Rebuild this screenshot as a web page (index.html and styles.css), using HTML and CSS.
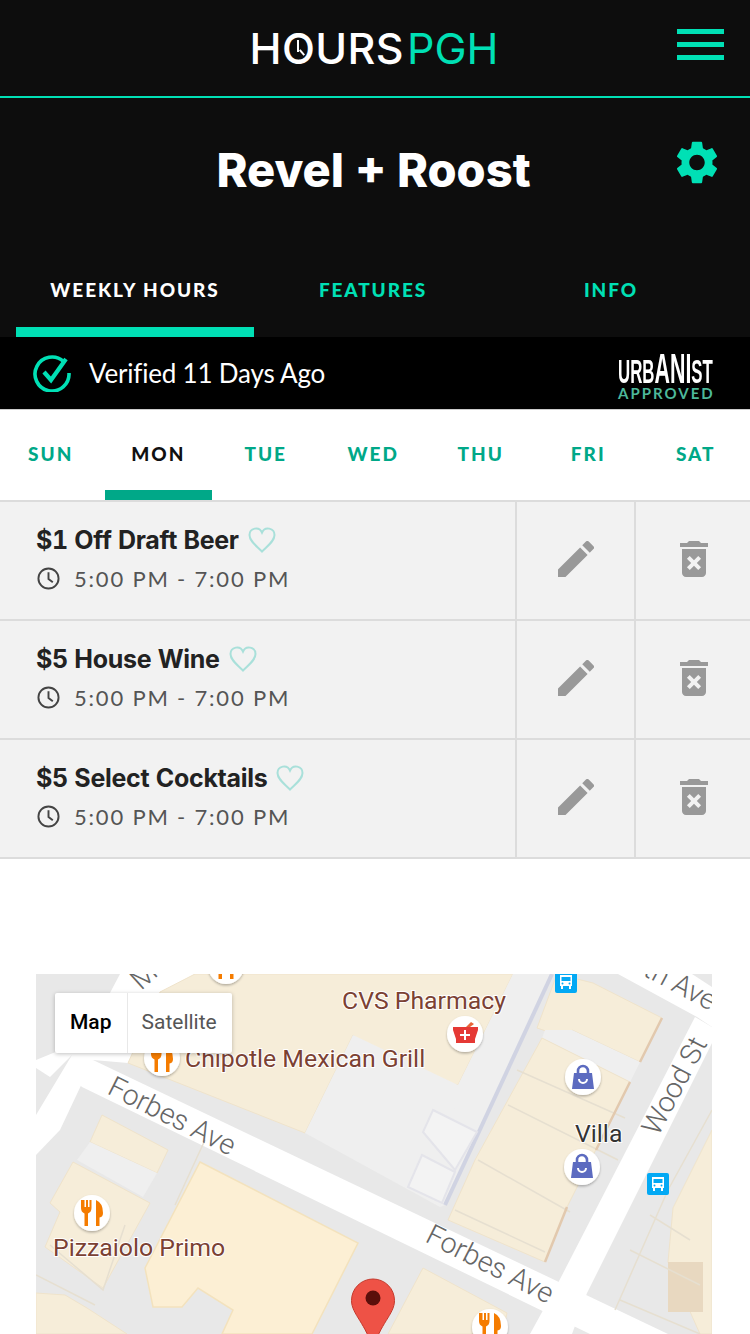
FILE: index.html
```html
<!DOCTYPE html>
<html lang="en">
<head>
  <meta charset="UTF-8" />
  <meta name="viewport" content="width=device-width, initial-scale=1.0"/>
  <title>Revel + Roost - Hours PGH</title>
  <link rel="stylesheet" href="styles.css">
</head>
<body>
  <div class="scroll-thumb"></div>

  <header class="topbar">
    <div class="logo">
      <span>H</span><span class="logo-o">O<i class="hand-long"></i><i class="hand-short"></i></span><span>URS</span><span class="logo-pgh">PGH</span>
    </div>
    <div class="burger"><span></span><span></span><span></span></div>
  </header>

  <section class="venue">
    <h1>Revel + Roost</h1>
    <svg class="gear" viewBox="2.6 2 18.8 20"><path d="M19.14 12.94c.04-.3.06-.61.06-.94 0-.32-.02-.64-.07-.94l2.03-1.58c.18-.14.23-.41.12-.61l-1.92-3.32c-.12-.22-.37-.29-.59-.22l-2.39.96c-.5-.38-1.03-.7-1.62-.94l-.36-2.54c-.04-.24-.24-.41-.48-.41h-3.84c-.24 0-.43.17-.47.41l-.36 2.54c-.59.24-1.13.57-1.62.94l-2.39-.96c-.22-.08-.47 0-.59.22L2.74 8.87c-.12.21-.08.47.12.61l2.03 1.58c-.05.3-.09.63-.09.94s.02.64.07.94l-2.03 1.58c-.18.14-.23.41-.12.61l1.92 3.32c.12.22.37.29.59.22l2.39-.96c.5.38 1.03.7 1.62.94l.36 2.54c.05.24.24.41.48.41h3.84c.24 0 .44-.17.47-.41l.36-2.54c.59-.24 1.13-.56 1.62-.94l2.39.96c.22.08.47 0 .59-.22l1.92-3.32c.12-.22.07-.47-.12-.61l-2.01-1.58zM12 15.6c-1.98 0-3.6-1.62-3.6-3.6s1.62-3.6 3.6-3.6 3.6 1.62 3.6 3.6-1.62 3.6-3.6 3.6z"/></svg>
  </section>

  <nav class="tabs">
    <a class="tab active">WEEKLY HOURS</a>
    <a class="tab">FEATURES</a>
    <a class="tab">INFO</a>
  </nav>

  <div class="verified">
    <svg class="check" viewBox="0 0 38 38">
      <path d="M30.5 7.5A17 17 0 1 0 36 19" fill="none" stroke="#00e0b5" stroke-width="3.6"/>
      <path d="M11 18l7 8L33 5" fill="none" stroke="#00e0b5" stroke-width="4.2"/>
    </svg>
    <span class="verified-text">Verified 11 Days Ago</span>
    <div class="urbanist">
      <div class="urbanist-word">URB<span class="u-big">ANI</span>ST</div>
      <div class="approved">APPROVED</div>
    </div>
  </div>

  <nav class="days">
    <a class="day">SUN</a>
    <a class="day active">MON</a>
    <a class="day">TUE</a>
    <a class="day">WED</a>
    <a class="day">THU</a>
    <a class="day">FRI</a>
    <a class="day">SAT</a>
  </nav>

  <div class="specials">
    <div class="special">
      <div class="special-info">
        <div class="special-name">$1 Off Draft Beer
          <svg class="heart" viewBox="0 0 28 26"><path d="M14 24.5C8 18.5 1.5 14 1.5 8A6.5 6.5 0 0 1 14 5.5 6.5 6.5 0 0 1 26.500 8C26.500 14 20 18.500 14 24.500z"/></svg>
        </div>
        <div class="special-time">
          <svg class="clock" viewBox="0 0 24 24"><circle cx="12" cy="12" r="10.500"/><path d="M12 5.500V12.500L16.500 16"/></svg>
          5:00 PM - 7:00 PM
        </div>
      </div>
      <div class="action edit">
        <svg class="pencil" viewBox="3 3 18 18"><path d="M3 17.25V21h3.75L17.81 9.94l-3.75-3.75L3 17.25zM20.71 7.04a1 1 0 0 0 0-1.410l-2.340-2.340a1 1 0 0 0-1.410 0l-1.830 1.830 3.750 3.750 1.830-1.830z"/></svg>
      </div>
      <div class="action remove">
        <svg class="trash" viewBox="5 3 14 18"><path d="M6 19c0 1.100.9 2 2 2h8c1.100 0 2-.9 2-2V7H6v12zm2.460-7.120l1.410-1.410L12 12.590l2.120-2.120 1.410 1.410L13.410 14l2.120 2.120-1.410 1.410L12 15.410l-2.120 2.120-1.410-1.410L10.590 14l-2.130-2.120zM15.500 4l-1-1h-5l-1 1H5v2h14V4z"/></svg>
      </div>
    </div>

    <div class="special">
      <div class="special-info">
        <div class="special-name">$5 House Wine
          <svg class="heart" viewBox="0 0 28 26"><path d="M14 24.5C8 18.5 1.5 14 1.5 8A6.5 6.5 0 0 1 14 5.5 6.5 6.5 0 0 1 26.500 8C26.500 14 20 18.500 14 24.500z"/></svg>
        </div>
        <div class="special-time">
          <svg class="clock" viewBox="0 0 24 24"><circle cx="12" cy="12" r="10.500"/><path d="M12 5.500V12.500L16.500 16"/></svg>
          5:00 PM - 7:00 PM
        </div>
      </div>
      <div class="action edit">
        <svg class="pencil" viewBox="3 3 18 18"><path d="M3 17.25V21h3.75L17.81 9.94l-3.75-3.75L3 17.25zM20.71 7.04a1 1 0 0 0 0-1.410l-2.340-2.340a1 1 0 0 0-1.410 0l-1.830 1.830 3.750 3.750 1.830-1.830z"/></svg>
      </div>
      <div class="action remove">
        <svg class="trash" viewBox="5 3 14 18"><path d="M6 19c0 1.100.9 2 2 2h8c1.100 0 2-.9 2-2V7H6v12zm2.460-7.120l1.410-1.410L12 12.590l2.120-2.120 1.410 1.410L13.410 14l2.120 2.120-1.410 1.410L12 15.410l-2.120 2.120-1.410-1.410L10.590 14l-2.130-2.120zM15.500 4l-1-1h-5l-1 1H5v2h14V4z"/></svg>
      </div>
    </div>

    <div class="special">
      <div class="special-info">
        <div class="special-name">$5 Select Cocktails
          <svg class="heart" viewBox="0 0 28 26"><path d="M14 24.5C8 18.5 1.5 14 1.5 8A6.5 6.5 0 0 1 14 5.5 6.5 6.5 0 0 1 26.500 8C26.500 14 20 18.500 14 24.500z"/></svg>
        </div>
        <div class="special-time">
          <svg class="clock" viewBox="0 0 24 24"><circle cx="12" cy="12" r="10.500"/><path d="M12 5.500V12.500L16.500 16"/></svg>
          5:00 PM - 7:00 PM
        </div>
      </div>
      <div class="action edit">
        <svg class="pencil" viewBox="3 3 18 18"><path d="M3 17.25V21h3.75L17.81 9.94l-3.75-3.75L3 17.25zM20.71 7.04a1 1 0 0 0 0-1.410l-2.340-2.340a1 1 0 0 0-1.410 0l-1.830 1.830 3.750 3.750 1.830-1.830z"/></svg>
      </div>
      <div class="action remove">
        <svg class="trash" viewBox="5 3 14 18"><path d="M6 19c0 1.100.9 2 2 2h8c1.100 0 2-.9 2-2V7H6v12zm2.460-7.120l1.410-1.410L12 12.590l2.120-2.120 1.410 1.410L13.410 14l2.120 2.120-1.410 1.410L12 15.410l-2.120 2.120-1.410-1.410L10.590 14l-2.130-2.120zM15.500 4l-1-1h-5l-1 1H5v2h14V4z"/></svg>
      </div>
    </div>
  </div>

  <div class="map">
    <svg class="map-canvas" viewBox="36 974 676 360">
      <defs>
        <g id="fork">
          <path d="M-11 -13v8q0 4 3.500 5.500V13h3.500V.5q3.500-1.500 3.500-5.500v-8h-2v7h-1.500v-7h-2v7h-1.500v-7z" fill="#f57c00"/>
          <path d="M4 13V-13q7 3 7 13 0 4-3.500 4.500V13z" fill="#f57c00"/>
        </g>
        <g id="bag">
          <path d="M-5 -5v-2a5 5 0 0 1 10 0v2" fill="none" stroke="#5c6bc0" stroke-width="2.600"/>
          <path d="M-9 -5H9L11 11H-11z" fill="#5c6bc0"/>
          <path d="M-4 1a4 4 0 0 0 8 0" fill="none" stroke="#fff" stroke-width="2"/>
        </g>
        <g id="bus">
          <rect x="-11" y="-11" width="22" height="22" rx="2" fill="#03a9f4"/>
          <path d="M-6 -7h12v11h-1v3h-2v-3h-6v3h-2v-3h-1z" fill="#fff"/>
          <rect x="-4.500" y="-5" width="9" height="4" fill="#03a9f4"/>
          <circle cx="-3.500" cy="1.500" r="1" fill="#03a9f4"/>
          <circle cx="3.500" cy="1.500" r="1" fill="#03a9f4"/>
        </g>
        <filter id="pin-shadow" x="-30%" y="-30%" width="160%" height="170%">
          <feDropShadow dx="0" dy="1.500" stdDeviation="1" flood-color="#000" flood-opacity=".28"/>
        </filter>
      </defs>

      <rect x="36" y="974" width="676" height="360" fill="#e8e8e8"/>

      <!-- roads -->
      <path class="road" d="M120 974H195L165 992 128 1063 93 1060 60 1130 36 1155V1115L72 1055 50 1077 36 1068V1060L85 1040z"/>
      <path class="road" d="M93 1060L668 1334H590L82 1087 70 1075z"/>
      <path class="road" d="M695 1017L712 1027V1043L587 1293 572 1334H530L558 1283z"/>
      <path class="road" d="M618 974H692L712 987V1027L697 1017z"/>

      <!-- blocks -->
      <path class="beige" d="M195 974H513L458 1085 400 1075 353 1035 305 1133 128 1063 160 992z"/>
      <path class="plaza" d="M353 1035L458 1085 488 1100 540 974H513L440 1207 305 1133z"/>
      <path class="plaza" d="M513 974H552L445 1205 440 1207 458 1085z"/>
      <path class="plaza-edge" d="M552 974L445 1205"/>
      <path class="plaza-box" d="M433 1110L477 1132 455 1170 423 1132z"/>
      <path class="plaza-box" d="M422 1155L455 1172 442 1203 408 1187z"/>
      <path class="beige" d="M557 974L593 983 662 1018 640 1062 572 1030 567 1038 537 1028z"/>
      <path class="plaza" d="M572 1030L640 1062 630 1082 542 1038 545 1030z"/>
      <path class="beige" d="M542 1038L630 1082 567 1207 545 1262 448 1220 475 1160z"/>
      <path class="line" d="M508 1105L618 1160M478 1160L570 1212M455 1210L545 1252M517 1070L625 1118"/>
      <path class="edge" d="M662 1018L640 1062M630 1082L596 1150M567 1207L545 1262"/>
      <path class="beige" d="M102 1115L168 1150 157 1173 90 1142z"/>
      <path class="plaza" d="M90 1142L157 1173 143 1197 77 1160z"/>
      <path class="beige" d="M73 1162L150 1203 103 1288 45 1247 60 1212 50 1203z"/>
      <path class="beige" d="M36 1293L65 1295 87 1308 127 1334H36z"/>
      <path class="bright" d="M200 1162L358 1243 312 1334H222L233 1310 198 1288 182 1307H153L145 1268z"/>
      <path class="beige" d="M423 1268L507 1313 502 1334H388z"/>
      <path class="beige" d="M673 1208L712 1130V1334L700 1334 668 1262z"/>
      <rect x="668" y="1262" width="35" height="50" fill="#e8d8c0"/>
      <path class="line" d="M615 1310L668 1190 712 1110M630 1250L700 1285M650 1215L690 1240M620 1300L700 1334M50 1245L103 1290 125 1225M36 1275L95 1305M205 1140L175 1205"/>

      <!-- road names -->
      <text class="road-name" transform="translate(106 1093) rotate(27)">Forbes Ave</text>
      <text class="road-name" transform="translate(424 1241) rotate(27)">Forbes Ave</text>
      <text class="road-name" transform="translate(658 1137) rotate(-62)">Wood St</text>
      <text class="road-name end" transform="translate(710 1011) rotate(28)">Fifth Ave</text>
      <text class="road-name" transform="translate(141 991) rotate(-42)">M</text>

      <!-- places -->
      <text class="place" x="342" y="1009">CVS Pharmacy</text>
      <text class="place" x="185" y="1067">Chipotle Mexican Grill</text>
      <text class="place" x="53" y="1256">Pizzaiolo Primo</text>
      <text class="place dark" x="575" y="1142">Villa</text>

      <!-- markers -->
      <g filter="url(#pin-shadow)">
        <circle class="dot" cx="226" cy="966" r="18"/>
        <circle class="dot" cx="162" cy="1058" r="18"/>
        <circle class="dot" cx="92" cy="1213" r="18"/>
        <circle class="dot" cx="465" cy="1034" r="18"/>
        <circle class="dot" cx="583" cy="1077" r="18"/>
        <circle class="dot" cx="582" cy="1167" r="18"/>
        <circle class="dot" cx="490" cy="1327" r="18"/>
      </g>
      <use href="#fork" transform="translate(226 966)"/>
      <use href="#fork" transform="translate(162 1059)"/>
      <use href="#fork" transform="translate(92 1213)"/>
      <use href="#fork" transform="translate(490 1326)"/>
      <use href="#bag" transform="translate(583 1078)"/>
      <use href="#bag" transform="translate(582 1167)"/>
      <use href="#bus" transform="translate(566 982)"/>
      <use href="#bus" transform="translate(658 1184)"/>
      <path d="M453 1027h25v3l-3 9v4h-19v-4l-3-9z" fill="#e53935"/>
      <path d="M466 1027l5-5 3 2-4 3z" fill="#e8663a"/>
      <path d="M465 1030v10M460 1035h10" stroke="#fff" stroke-width="2"/>

      <path d="M373 1279a21.500 21.500 0 0 1 21.500 21.500c0 14-15 23-21.500 50-6.500-27-21.500-36-21.500-50a21.500 21.500 0 0 1 21.500-21.500z" fill="#ee5246" stroke="#c5392c"/>
      <circle cx="373" cy="1298" r="7.500" fill="#5a0f0b"/>
    </svg>

    <div class="map-type">
      <div class="map-type-btn active">Map</div>
      <div class="map-type-btn">Satellite</div>
    </div>
  </div>
</body>
</html>
```

FILE: styles.css
```css
:root {
  --teal: #00e0b5;
  --teal-dark: #00a888;
  --black: #0d0d0d;
  --line: #dcdcdc;
}

html, body {
  height: 1334px;
  overflow: hidden;
}

body {
  margin: 0;
  position: relative;
  font-family: Lato, sans-serif;
  background-color: #fff;
  color: #222;
}

.scroll-thumb {
  position: absolute;
  top: 77px;
  right: 0;
  width: 8px;
  height: 75px;
  background-color: #0a6ebd;
  border-radius: 5px 0 0 5px;
}

/* top bar */
.topbar {
  height: 96px;
  background-color: var(--black);
  border-bottom: 2px solid var(--teal);
  display: flex;
  justify-content: center;
  align-items: center;
  position: relative;
}

.logo {
  font-family: Inter, sans-serif;
  font-size: 43px;
  font-weight: 500;
  line-height: 1;
  letter-spacing: .4px;
  color: #fff;
  display: flex;
  margin-left: -2px;
}

.logo-pgh {
  color: var(--teal);
  font-weight: 400;
  letter-spacing: 0;
  margin-left: 3px;
}

.logo-o {
  position: relative;
}

.logo-o i {
  position: absolute;
  background-color: #fff;
  width: 2px;
}

.hand-long {
  left: 15px;
  top: 13px;
  height: 12px;
}

.hand-short {
  left: 19px;
  top: 22px;
  height: 7px;
  transform: rotate(-40deg);
}

.burger {
  position: absolute;
  right: 26px;
  top: 29px;
  width: 47px;
  display: flex;
  flex-direction: column;
  gap: 8px;
}

.burger span {
  height: 5px;
  background-color: var(--teal);
}

/* venue title */
.venue {
  height: 147px;
  background-color: var(--black);
  display: flex;
  justify-content: center;
  align-items: flex-start;
  position: relative;
}

.venue h1 {
  margin: 43px 0 0 -3px;
  font-family: Inter, sans-serif;
  font-size: 47px;
  line-height: 58px;
  font-weight: 800;
  color: #fff;
}

.gear {
  position: absolute;
  top: 43px;
  left: 676px;
  width: 42px;
  height: 43px;
  fill: var(--teal);
}

/* main tabs */
.tabs {
  height: 92px;
  padding: 0 20px 0 16px;
  background-color: var(--black);
  display: grid;
  grid-template-columns: repeat(3, 238px);
}

.tab {
  padding-top: 33px;
  text-align: center;
  font-size: 19px;
  line-height: 24px;
  font-weight: 900;
  letter-spacing: 1.9px;
  color: var(--teal);
  box-sizing: border-box;
}

.tab.active {
  color: #fff;
  border-bottom: 10px solid var(--teal);
}

/* verified strip */
.verified {
  height: 72px;
  padding: 0 38px 0 33px;
  background-color: #000;
  display: flex;
  align-items: center;
  color: #fff;
}

.check {
  width: 38px;
  height: 38px;
  flex: none;
}

.verified-text {
  margin-left: 18px;
  font-size: 26px;
  letter-spacing: -.2px;
  flex: 1;
}

.urbanist {
  width: 94px;
  padding-top: 7px;
  text-align: center;
}

.urbanist-word {
  width: max-content;
  height: 34px;
  font-family: "Liberation Sans", sans-serif;
  font-size: 33px;
  font-weight: 700;
  line-height: 34px;
  white-space: nowrap;
  transform: scaleX(.51);
  transform-origin: left center;
}

.u-big {
  font-size: 42px;
  line-height: 34px;
}

.approved {
  font-size: 15px;
  line-height: 15px;
  font-weight: 700;
  letter-spacing: 2px;
  color: #4db89a;
  white-space: nowrap;
}

/* day picker */
.days {
  height: 90px;
  margin-left: -3px;
  display: grid;
  grid-template-columns: repeat(7, 107.5px);
  border-top: 1px solid #ccc;
  border-bottom: 2px solid var(--line);
  width: 753px;
}

.day {
  padding-top: 32px;
  text-align: center;
  font-size: 19px;
  line-height: 24px;
  font-weight: 900;
  letter-spacing: 2px;
  color: var(--teal-dark);
  box-sizing: border-box;
}

.day.active {
  color: #111;
  border-bottom: 10px solid var(--teal-dark);
}

/* specials list */
.special {
  height: 119px;
  box-sizing: border-box;
  background-color: #f2f2f2;
  border-bottom: 2px solid var(--line);
  display: flex;
}

.special-info {
  flex: 1;
  padding: 22px 0 0 36px;
}

.special-name {
  display: flex;
  align-items: center;
  gap: 9px;
  height: 32px;
  font-family: Inter, sans-serif;
  font-size: 25px;
  font-weight: 700;
  font-variant-numeric: tabular-nums;
  letter-spacing: -.3px;
  color: #222;
}

.heart {
  width: 28px;
  height: 26px;
  fill: none;
  stroke: #a9e0da;
  stroke-width: 2;
}

.special-time {
  display: flex;
  align-items: center;
  gap: 14px;
  margin-top: 9px;
  padding-left: 1px;
  font-size: 22px;
  font-weight: 400;
  letter-spacing: 1.8px;
  color: #555;
}

.clock {
  width: 23px;
  height: 23px;
  fill: none;
  stroke: #444;
  stroke-width: 2;
}

.action {
  border-left: 2px solid var(--line);
  box-sizing: border-box;
  display: flex;
  justify-content: center;
  padding-top: 39px;
}

.action.edit {
  width: 119px;
}

.action.remove {
  width: 116px;
  padding-left: 2px;
}

.pencil {
  width: 36px;
  height: 36px;
  fill: #999;
}

.trash {
  width: 28px;
  height: 36px;
  fill: #999;
}

/* map */
.map {
  position: relative;
  width: 676px;
  height: 360px;
  margin: 115px 0 0 36px;
  overflow: hidden;
}

.map-canvas {
  display: block;
  width: 676px;
  height: 360px;
  font-family: Roboto, sans-serif;
}

.road { fill: #fff; }
.beige { fill: #f6edd9; stroke: #efe3cb; }
.bright { fill: #fcefd4; stroke: #f3e2bd; stroke-width: 1.500; }
.plaza { fill: #efefef; }
.plaza-edge { stroke: #d0d3e2; stroke-width: 4; fill: none; }
.plaza-box { fill: #f3f3f3; stroke: #e4e4ea; stroke-width: 2; }
.line { fill: none; stroke: #e6dfd0; stroke-width: 1.500; }
.edge { fill: none; stroke: #e2c9ae; stroke-width: 2.500; }
.dot { fill: #fff; }

.road-name {
  font-size: 28.500px;
  font-weight: 300;
  fill: #666;
}

.road-name.end {
  text-anchor: end;
}

.place {
  font-size: 24.800px;
  fill: #7b4133;
  paint-order: stroke;
  stroke: #fff;
  stroke-width: 2px;
}

.place.dark {
  fill: #333;
}

.map-type {
  position: absolute;
  top: 19px;
  left: 19px;
  display: flex;
  background-color: #fff;
  border-radius: 2px;
  box-shadow: 0 1px 4px rgba(0,0,0,0.25);
  font-family: Roboto, sans-serif;
  font-size: 21px;
  line-height: 58px;
  height: 60px;
  color: #565656;
}

.map-type-btn {
  padding: 0 15px 0 14px;
  border-left: 1px solid #e8e8e8;
}

.map-type-btn.active {
  border-left: none;
  padding: 0 15px;
  font-weight: 500;
  color: #000;
}
```
